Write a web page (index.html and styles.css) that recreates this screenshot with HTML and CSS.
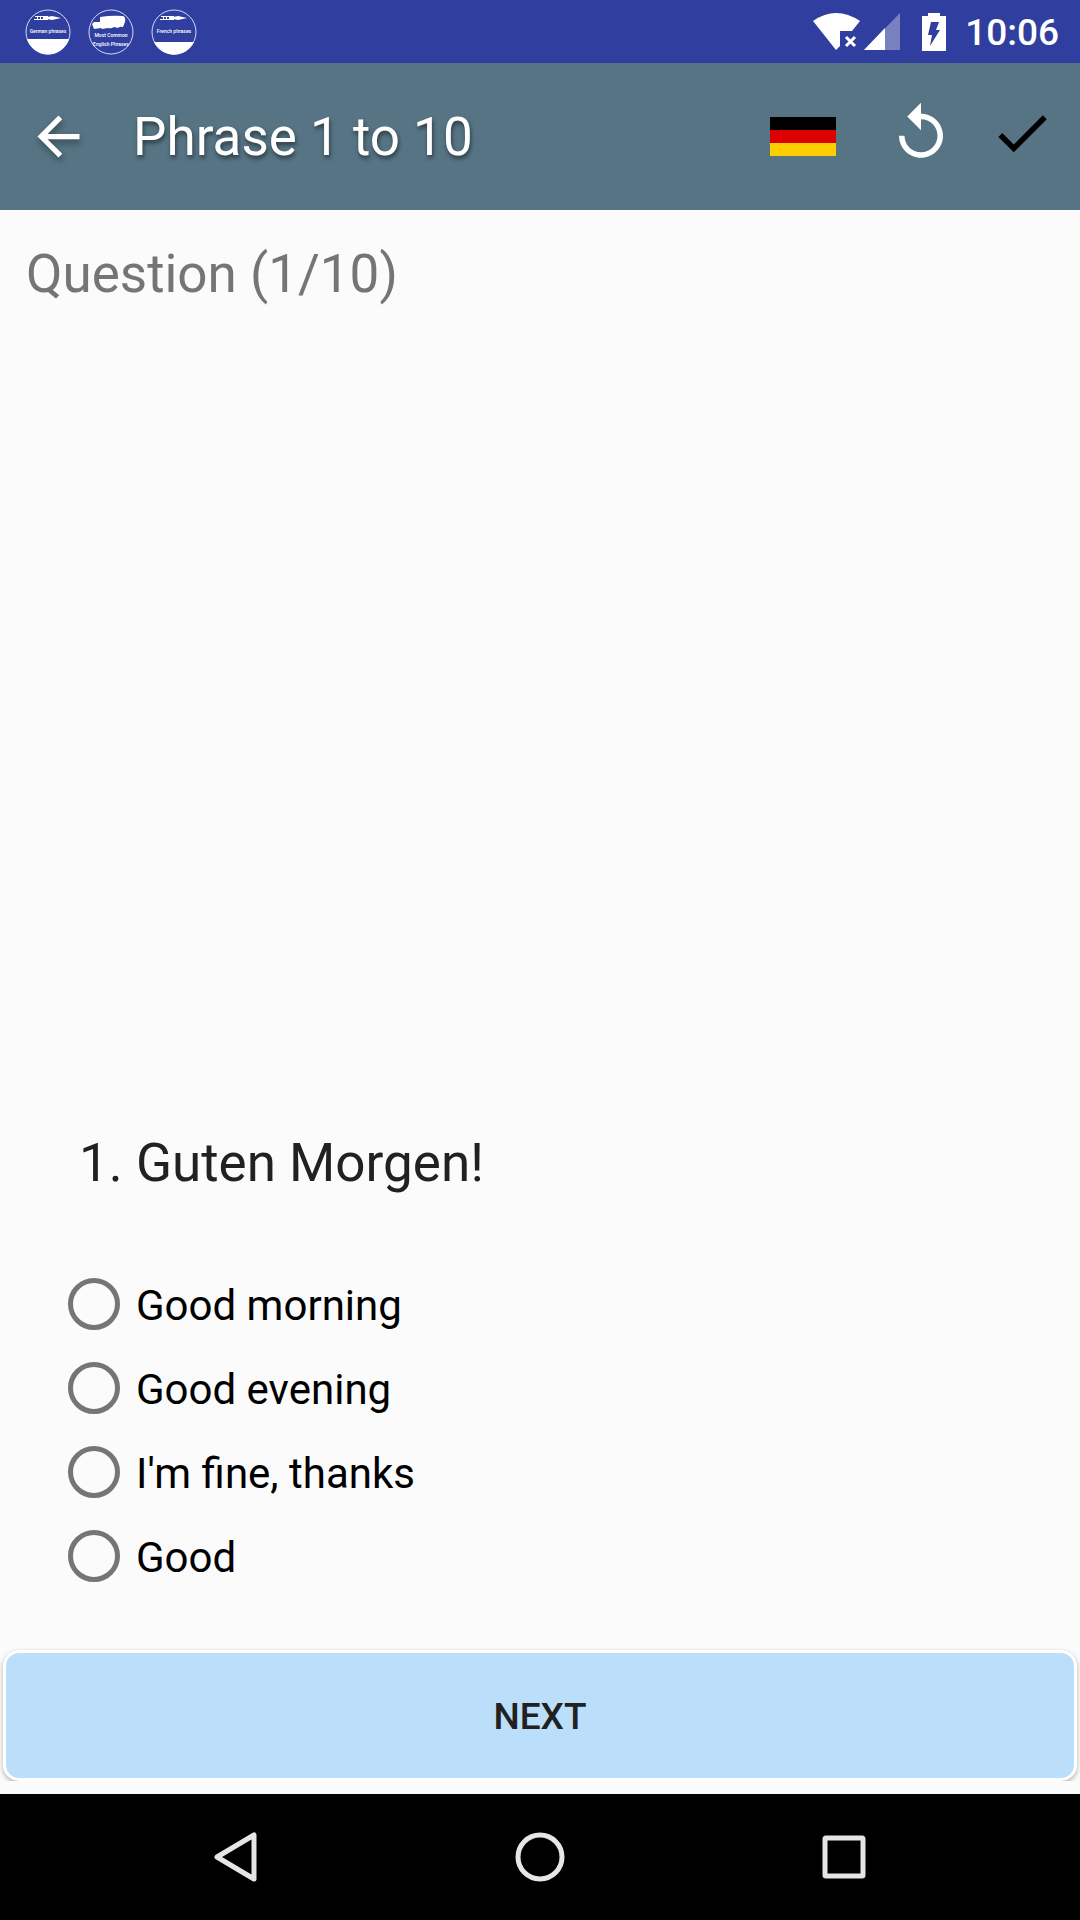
FILE: index.html
```
<!DOCTYPE html>
<html lang="en">
<head>
	<meta charset="UTF-8">
	<meta name="viewport" content="width=device-width, initial-scale=1.0">
	<title>Phrase 1 to 10</title>
	<link rel="stylesheet" href="styles.css">
</head>
<body>
	<div class="status-bar">
		<div class="notifications">
			<svg class="app-icon" viewBox="0 0 46 46">
				<circle cx="23" cy="23" r="22" class="ring"/>
				<path d="M2 30H44A22 22 0 0 1 2 30z" fill="#fff"/>
				<path d="M10 7h13v1H10zM12 8h1v3h-1zM15 8h1v3h-1zM18 8h4v3h-4zM9 10h14v1H9zM22 8l5-1 9 2-9 2-5-1z" fill="#fff"/>
				<text x="23" y="24" class="app-label">German phrases</text>
			</svg>
			<svg class="app-icon" viewBox="0 0 46 46">
				<circle cx="23" cy="23" r="22" class="ring"/>
				<path d="M12 8q12-2 23-1q3 1 2 6l-2 5q-3-1-5 1l-4-1q-3 2-6 1l-6 1-1-1-7 1-2-5 2-2h6z" fill="#fff"/>
				<text x="23" y="28" class="app-label">Most Common</text>
				<text x="23" y="37" class="app-label">English Phrases</text>
			</svg>
			<svg class="app-icon" viewBox="0 0 46 46">
				<circle cx="23" cy="23" r="22" class="ring"/>
				<path d="M3 33H43A22 22 0 0 1 3 33z" fill="#fff"/>
				<path d="M10 7h13v1H10zM12 8h1v3h-1zM15 8h1v3h-1zM18 8h4v3h-4zM9 10h14v1H9zM22 8l5-1 9 2-9 2-5-1z" fill="#fff"/>
				<text x="23" y="24" class="app-label">French phrases</text>
			</svg>
		</div>
		<div class="system">
			<svg width="48" height="38" viewBox="0 0 48 38">
				<path d="M0 8Q23-8 47 8L39 18H27V33L23 37z" fill="#fff"/>
				<path d="M33 24l9 9M42 24l-9 9" stroke="#fff" stroke-width="3"/>
			</svg>
			<svg width="36" height="38" viewBox="0 0 36 38">
				<path d="M36 0V37H0z" fill="#fff" opacity=".35"/>
				<path d="M21 15V37H0z" fill="#fff"/>
			</svg>
			<svg class="battery" width="24" height="38" viewBox="0 0 24 38">
				<path d="M6 0H18V3H24V38H0V3H6z" fill="#fff"/>
				<path d="M9 9H17L14 17H18L8 33L10 22H6z" fill="#303f9f"/>
			</svg>
			<span class="clock">10:06</span>
		</div>
	</div>

	<header class="toolbar">
		<button class="icon-button back" aria-label="Back">
			<svg width="63" height="63" viewBox="0 0 24 24"><path d="M20 11H7.830l5.590-5.590L12 4l-8 8 8 8 1.410-1.410L7.830 13H20v-2z" fill="#fff"/></svg>
		</button>
		<h1 class="title">Phrase 1 to 10</h1>
		<button class="icon-button flag" aria-label="German">
			<svg width="66" height="39" viewBox="0 0 66 39">
				<path d="M0 0H66V13H0z" fill="#000"/>
				<path d="M0 13H66V26H0z" fill="#d00"/>
				<path d="M0 26H66V39H0z" fill="#ffce00"/>
			</svg>
		</button>
		<button class="icon-button action replay" aria-label="Restart">
			<svg width="66" height="66" viewBox="0 0 24 24"><path d="M12 5V1L7 6l5 5V7c3.310 0 6 2.690 6 6s-2.690 6-6 6-6-2.690-6-6H4c0 4.420 3.580 8 8 8s8-3.580 8-8-3.580-8-8-8z" fill="#fff"/></svg>
		</button>
		<button class="icon-button action" aria-label="Check">
			<svg width="66" height="66" viewBox="0 0 24 24"><path d="M9 16.170L4.830 12l-1.420 1.410L9 19 21 7l-1.410-1.410z" fill="#000"/></svg>
		</button>
	</header>

	<main class="content">
		<p class="progress">Question (1/10)</p>
		<form class="quiz">
			<h2 class="question" id="question">1. Guten Morgen!</h2>
			<div class="answers" role="radiogroup" aria-labelledby="question">
				<label class="answer"><input type="radio" name="answer"><span>Good morning</span></label>
				<label class="answer"><input type="radio" name="answer"><span>Good evening</span></label>
				<label class="answer"><input type="radio" name="answer"><span>I'm fine, thanks</span></label>
				<label class="answer"><input type="radio" name="answer"><span>Good</span></label>
			</div>
			<div class="next-wrap">
				<button type="button" class="next">NEXT</button>
			</div>
		</form>
	</main>

	<nav class="nav-bar">
		<button class="nav-button" aria-label="Back">
			<svg width="50" height="50" viewBox="0 0 50 50"><path d="M43 3V47L6 25z"/></svg>
		</button>
		<button class="nav-button" aria-label="Home">
			<svg width="50" height="50" viewBox="0 0 50 50"><circle cx="25" cy="25" r="22"/></svg>
		</button>
		<button class="nav-button" aria-label="Recent apps">
			<svg width="50" height="50" viewBox="0 0 50 50"><rect x="6" y="6" width="38" height="38" rx="1"/></svg>
		</button>
	</nav>
</body>
</html>
```

FILE: styles.css
```
* {
	box-sizing: border-box;
}
body {
	margin: 0;
	min-height: 100vh;
	display: flex;
	flex-direction: column;
	font-family: Roboto, sans-serif;
	background-color: #fbfbfb;
	color: #000000;
}
h1, h2, p {
	margin: 0;
	font-size: 53px;
	font-weight: 400;
	line-height: 64px;
}
button {
	font-family: inherit;
	border: none;
	padding: 0;
	background: none;
	cursor: pointer;
}
svg {
	display: block;
}

/* status bar */
.status-bar {
	display: flex;
	justify-content: space-between;
	align-items: center;
	height: 63px;
	padding: 0 21px 0 25px;
	background-color: #303f9f;
	color: #ffffff;
}
.notifications {
	display: flex;
	gap: 17px;
}
.app-icon {
	width: 46px;
	height: 46px;
}
.ring {
	fill: none;
	stroke: #ffffff;
	stroke-width: 1;
	opacity: 0.8;
}
.app-label {
	font-size: 5px;
	font-weight: 500;
	text-anchor: middle;
	fill: #ffffff;
}
.system {
	display: flex;
	align-items: center;
	gap: 3px;
}
.battery {
	margin: 0 16px 0 19px;
}
.clock {
	font-size: 37px;
	font-weight: 500;
	line-height: 40px;
	padding-top: 3px;
}

/* toolbar */
.toolbar {
	display: flex;
	align-items: center;
	height: 147px;
	padding: 0 25px 0 27px;
	background-color: #567484;
	color: #ffffff;
}
.title {
	flex: 1;
	margin-left: 43px;
	text-shadow: 1px 3px 4px rgba(0, 0, 0, 0.5);
}
.back svg {
	filter: drop-shadow(1px 4px 3px rgba(0, 0, 0, 0.35));
}
.flag {
	margin-right: 52px;
}
.action {
	padding-bottom: 7px;
}
.replay {
	margin-right: 35px;
}

/* quiz */
.content {
	flex: 1;
	display: flex;
	flex-direction: column;
	padding: 32px 0 13px;
}
.progress {
	padding: 0 26px;
	color: #757575;
}
.quiz {
	margin-top: auto;
}
.question {
	padding: 0 79px;
	color: #212121;
}
.answers {
	padding: 67px 68px 49px;
}
.answer {
	display: flex;
	align-items: center;
	gap: 16px;
	height: 84px;
	font-size: 42px;
	line-height: 48px;
}
.answer span {
	padding-top: 4px;
}
.answer input {
	appearance: none;
	width: 52px;
	height: 52px;
	margin: 0;
	border: 5px solid #757575;
	border-radius: 50%;
}
.answer input:checked {
	background: radial-gradient(#757575 50%, transparent 52%);
}
.next-wrap {
	padding: 3px 3px 0;
	overflow: hidden;
}
.next {
	display: block;
	width: 100%;
	height: 131px;
	padding-top: 2px;
	border: 3px solid #ffffff;
	border-radius: 16px;
	background-color: #bbdefb;
	color: #212121;
	font-size: 37px;
	font-weight: 500;
	box-shadow: 0 2px 5px rgba(0, 0, 0, 0.3);
}

/* navigation bar */
.nav-bar {
	display: flex;
	justify-content: center;
	height: 126px;
	background-color: #000000;
}
.nav-button {
	display: flex;
	flex: 0 1 304px;
	align-items: center;
	justify-content: center;
}
.nav-button svg {
	fill: none;
	stroke: #e6e6e6;
	stroke-width: 5;
	stroke-linejoin: round;
}
```
